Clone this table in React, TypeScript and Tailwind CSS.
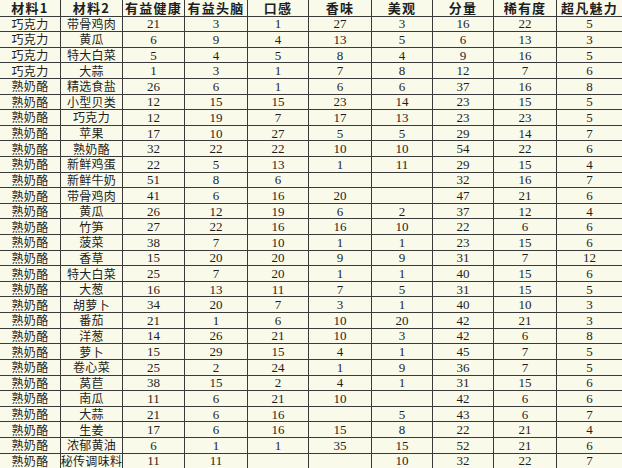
import React from "react";

const headers = ["材料1", "材料2", "有益健康", "有益头脑", "口感", "香味", "美观", "分量", "稀有度", "超凡魅力"];

const rows: (string | number | null)[][] = [
  ["巧克力", "带骨鸡肉", 21, 3, 1, 27, 3, 16, 22, 5],
  ["巧克力", "黄瓜", 6, 9, 4, 13, 5, 6, 13, 3],
  ["巧克力", "特大白菜", 5, 4, 5, 8, 4, 9, 16, 5],
  ["巧克力", "大蒜", 1, 3, 1, 7, 8, 12, 7, 6],
  ["熟奶酪", "精选食盐", 26, 6, 1, 6, 6, 37, 16, 8],
  ["熟奶酪", "小型贝类", 12, 15, 15, 23, 14, 23, 15, 5],
  ["熟奶酪", "巧克力", 12, 19, 7, 17, 13, 23, 23, 5],
  ["熟奶酪", "苹果", 17, 10, 27, 5, 5, 29, 14, 7],
  ["熟奶酪", "熟奶酪", 32, 22, 22, 10, 10, 54, 22, 6],
  ["熟奶酪", "新鲜鸡蛋", 22, 5, 13, 1, 11, 29, 15, 4],
  ["熟奶酪", "新鲜牛奶", 51, 8, 6, null, null, 32, 16, 7],
  ["熟奶酪", "带骨鸡肉", 41, 6, 16, 20, null, 47, 21, 6],
  ["熟奶酪", "黄瓜", 26, 12, 19, 6, 2, 37, 12, 4],
  ["熟奶酪", "竹笋", 27, 22, 16, 16, 10, 22, 6, 6],
  ["熟奶酪", "菠菜", 38, 7, 10, 1, 1, 23, 15, 6],
  ["熟奶酪", "香草", 15, 20, 20, 9, 9, 31, 7, 12],
  ["熟奶酪", "特大白菜", 25, 7, 20, 1, 1, 40, 15, 6],
  ["熟奶酪", "大葱", 16, 13, 11, 7, 5, 31, 15, 5],
  ["熟奶酪", "胡萝卜", 34, 20, 7, 3, 1, 40, 10, 3],
  ["熟奶酪", "番茄", 21, 1, 6, 10, 20, 42, 21, 3],
  ["熟奶酪", "洋葱", 14, 26, 21, 10, 3, 42, 6, 8],
  ["熟奶酪", "萝卜", 15, 29, 15, 4, 1, 45, 7, 5],
  ["熟奶酪", "卷心菜", 25, 2, 24, 1, 9, 36, 7, 5],
  ["熟奶酪", "莴苣", 38, 15, 2, 4, 1, 31, 15, 6],
  ["熟奶酪", "南瓜", 11, 6, 21, 10, null, 42, 6, 6],
  ["熟奶酪", "大蒜", 21, 6, 16, null, 5, 43, 6, 7],
  ["熟奶酪", "生姜", 17, 6, 16, 15, 8, 22, 21, 4],
  ["熟奶酪", "浓郁黄油", 6, 1, 1, 35, 15, 52, 21, 6],
  ["熟奶酪", "秘传调味料", 11, 11, null, null, 10, 32, 22, 7],
];

export default function App() {
  return (
    <div className="w-[622px] h-[468px] overflow-hidden bg-[#fafaeb] text-[#1e1e1e]">
      <div className="grid grid-cols-[61px_62px_62px_63px_61px_63px_61px_61px_63px_1fr]">
        {headers.map((h, i) => (
          <div
            key={h}
            className={`h-[16.5px] flex items-center justify-center border-b border-[#3a3a3a] text-[13px] font-bold leading-none tracking-[1.2px] ${i < 9 ? "border-r" : ""}`}
            style={{ fontFamily: '"Noto Sans CJK SC", sans-serif' }}
          >
            <span className="leading-[13px]">{h}</span>
          </div>
        ))}
        {rows.map((r, ri) =>
          r.map((c, ci) => (
            <div
              key={`${ri}-${ci}`}
              className={`h-[15.62px] flex items-center justify-center border-b border-[#3a3a3a] whitespace-nowrap ${ci < 9 ? "border-r" : ""} ${ci < 2 ? "text-[12px] tracking-[0.3px]" : "text-[13px] pt-[1px]"}`}
              style={{
                fontFamily: ci < 2 ? '"Noto Sans CJK SC", sans-serif' : '"Liberation Serif", serif',
              }}
            >
              <span className="leading-[12px]">{c ?? ""}</span>
            </div>
          ))
        )}
      </div>
    </div>
  );
}
